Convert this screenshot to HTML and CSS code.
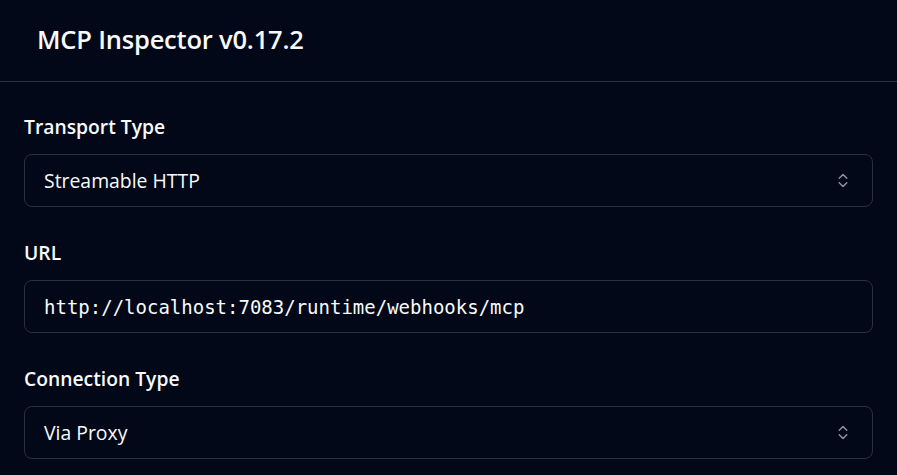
FILE: index.html
```html
<!DOCTYPE html>
<html>
<head>
<meta charset="utf-8">
<link rel="stylesheet" href="styles.css">
</head>
<body>
<div class="app">
  <header class="header">
    <h1 class="title">MCP Inspector v0.17.2</h1>
  </header>
  <main class="form">
    <div class="field">
      <label class="label">Transport Type</label>
      <div class="select">
        <span>Streamable HTTP</span>
        <svg class="chev" viewBox="0 0 24 24" fill="none" stroke="currentColor" stroke-width="2" stroke-linecap="round" stroke-linejoin="round"><path d="m7 15 5 5 5-5"/><path d="m7 9 5-5 5 5"/></svg>
      </div>
    </div>
    <div class="field">
      <label class="label">URL</label>
      <div class="input mono">http://localhost:7083/runtime/webhooks/mcp</div>
    </div>
    <div class="field">
      <label class="label">Connection Type</label>
      <div class="select">
        <span>Via Proxy</span>
        <svg class="chev" viewBox="0 0 24 24" fill="none" stroke="currentColor" stroke-width="2" stroke-linecap="round" stroke-linejoin="round"><path d="m7 15 5 5 5-5"/><path d="m7 9 5-5 5 5"/></svg>
      </div>
    </div>
  </main>
</div>
</body>
</html>
```
FILE: styles.css
```css
html, body {
  margin: 0;
  padding: 0;
  background: #020817;
  color: #f8fafc;
  font-family: "Open Sans", "Noto Sans", sans-serif;
  overflow: hidden;
}
.app {
  width: 897px;
  height: 475px;
}
.header {
  height: 81px;
  border-bottom: 1px solid #2b3342;
  display: flex;
  align-items: center;
  padding-left: 37px;
}
.title {
  margin: 0;
  font-size: 25.5px;
  font-weight: 600;
  letter-spacing: -0.2px;
  margin-top: -4px;
}
.form {
  padding: 31px 24px 0 24px;
  display: flex;
  flex-direction: column;
  gap: 32px;
}
.field {
  display: flex;
  flex-direction: column;
  gap: 13px;
}
.label {
  font-size: 19.3px;
  font-weight: 600;
  line-height: 28px;
}
.select, .input {
  height: 51px;
  border: 1px solid #283142;
  border-radius: 8px;
  display: flex;
  align-items: center;
  justify-content: space-between;
  padding: 0 20px 0 19px;
  font-size: 19.4px;
}
.mono {
  font-family: "DejaVu Sans Mono", "Liberation Mono", monospace;
  font-size: 19px;
  font-weight: normal;
}
.chev {
  color: #8a93a3;
  width: 18px;
  height: 21px;
}
```
